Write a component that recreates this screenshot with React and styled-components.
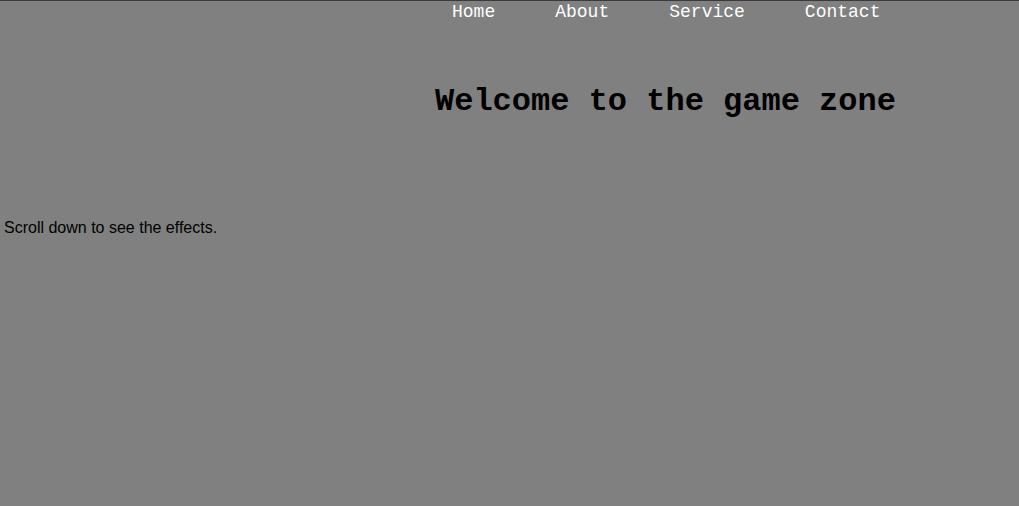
import React from "react";
import styled, { createGlobalStyle } from "styled-components";

const Global = createGlobalStyle`
  html, body { margin: 0; padding: 0; background: #808080; }
  body { font-family: "Liberation Sans", Arial, sans-serif; }
`;

const Page = styled.div`
  min-height: 506px;
  box-sizing: border-box;
  background: #808080;
  border-top: 1px solid #3a3a3a;
`;

const Nav = styled.nav`
  display: flex;
  padding-left: 452px;
`;

const NavList = styled.ul`
  display: flex;
  gap: 60px;
  list-style: none;
  margin: 0;
  padding: 1px 0 0;
`;

const NavLink = styled.a`
  font-family: "Liberation Mono", "Courier New", monospace;
  font-size: 18px;
  color: #ffffff;
  text-decoration: none;
`;

const Hero = styled.h1`
  margin: 61px 0 0;
  padding-left: 435px;
  font-family: "Liberation Mono", "Courier New", monospace;
  font-size: 32px;
  font-weight: bold;
  color: #000;
`;

const Note = styled.p`
  margin: 99px 0 0;
  padding-left: 4px;
  font-size: 16px;
  color: #000;
`;

const items = ["Home", "About", "Service", "Contact"];

export default function App() {
  return (
    <Page>
      <Global />
      <Nav>
        <NavList>
          {items.map((t) => (
            <li key={t}>
              <NavLink href="#">{t}</NavLink>
            </li>
          ))}
        </NavList>
      </Nav>
      <Hero>Welcome to the game zone</Hero>
      <Note>Scroll down to see the effects.</Note>
    </Page>
  );
}
